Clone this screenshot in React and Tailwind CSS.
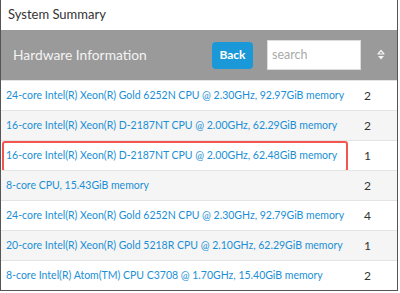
import React from 'react'

const rows = [
  { name: '24-core Intel(R) Xeon(R) Gold 6252N CPU @ 2.30GHz, 92.97GiB memory', count: 2 },
  { name: '16-core Intel(R) Xeon(R) D-2187NT CPU @ 2.00GHz, 62.29GiB memory', count: 2 },
  { name: '16-core Intel(R) Xeon(R) D-2187NT CPU @ 2.00GHz, 62.48GiB memory', count: 1, marked: true },
  { name: '8-core CPU, 15.43GiB memory', count: 2 },
  { name: '24-core Intel(R) Xeon(R) Gold 6252N CPU @ 2.30GHz, 92.79GiB memory', count: 4 },
  { name: '20-core Intel(R) Xeon(R) Gold 5218R CPU @ 2.10GHz, 62.29GiB memory', count: 1 },
  { name: '8-core Intel(R) Atom(TM) CPU C3708 @ 1.70GHz, 15.40GiB memory', count: 2 },
]

function SortIcon() {
  return (
    <svg width="8" height="12" viewBox="0 0 8 12" className="text-[#f2f2f2]">
      <path d="M4 1.5 L7 5 L1 5 Z" fill="none" stroke="currentColor" strokeWidth="1.2" strokeLinejoin="round" />
      <path d="M4 10.5 L7 7 L1 7 Z" fill="currentColor" />
    </svg>
  )
}

export default function App() {
  return (
    <div className="w-[400px] h-[293px] bg-white font-['Lato','Open_Sans',sans-serif] overflow-hidden">
      <div className="w-[398px] border-x border-b border-[#555]">
        {/* title */}
        <div className="h-[30px] flex items-center pl-[7px] text-[13px] text-[#333]">System Summary</div>

        {/* header */}
        <div className="h-[50px] bg-[#9a9a9a] flex items-center pl-[12px] pr-[12px]">
          <div className="text-[13.8px] text-[#f4f4f4] flex-1 pt-[1px]">Hardware Information</div>
          <button className="h-[27px] w-[41px] rounded-[4px] bg-[#1a98d8] text-white text-[12px] font-bold flex items-center justify-center">
            Back
          </button>
          <div className="ml-[14px] w-[94px] h-[30px] bg-white border border-[#ddd] flex items-center pl-[4px] text-[12.5px] text-[#aaa]">
            search
          </div>
          <div className="ml-[16px] flex items-center">
            <SortIcon />
          </div>
        </div>

        {/* rows */}
        {rows.map((r, i) => (
          <div
            key={i}
            className={`relative h-[30px] grid grid-cols-[352px_1fr] items-center border-t border-[#e4e4e4] ${i % 2 === 1 ? 'bg-[#f5f5f5]' : 'bg-white'}`}
          >
            <a className="pl-[5px] text-[10.5px] text-[#1a8fd5] whitespace-nowrap">{r.name}</a>
            <div className="pl-[11px] text-[12px] text-[#333]">{r.count}</div>
            {r.marked && (
              <div className="absolute left-[1px] top-0 w-[346px] h-[31px] border-2 border-[#f3564f] rounded-[3px]" />
            )}
          </div>
        ))}
      </div>
    </div>
  )
}
